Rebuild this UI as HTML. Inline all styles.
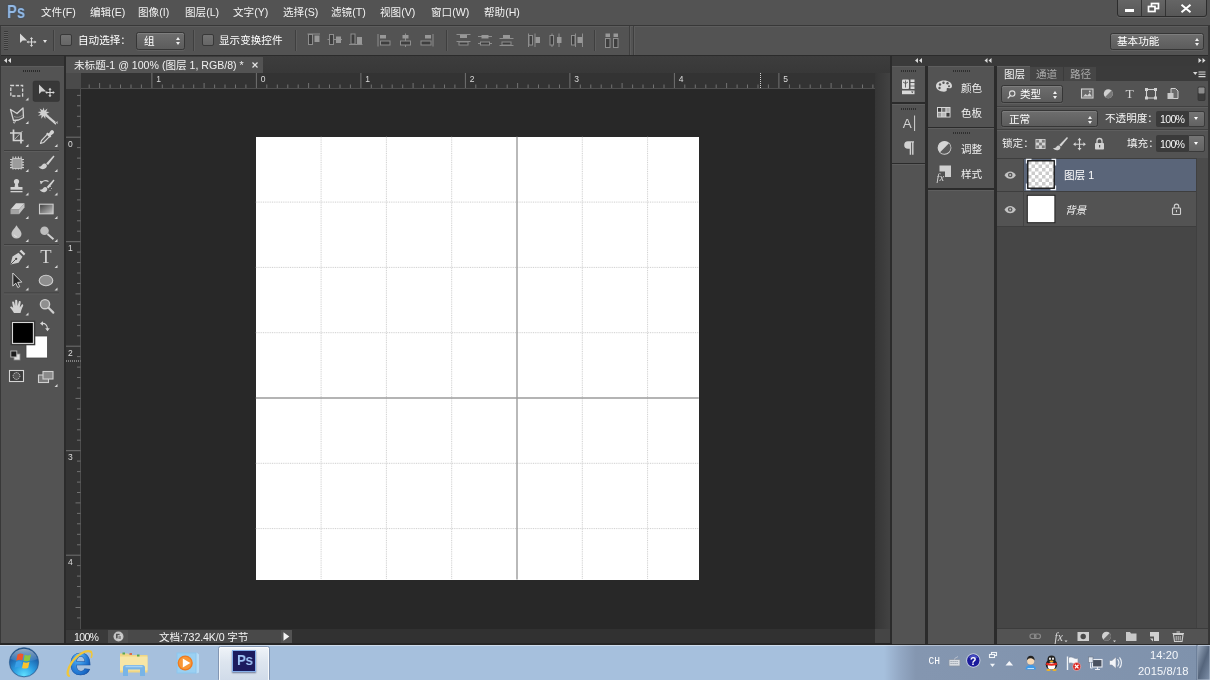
<!DOCTYPE html>
<html lang="zh-CN">
<head>
<meta charset="utf-8">
<title>Photoshop</title>
<style>
*{box-sizing:border-box;margin:0;padding:0}
html,body{width:1210px;height:680px;overflow:hidden;background:#535353}.t,span.a,svg{will-change:transform}
body{position:relative;font-family:"Liberation Sans","Noto Sans CJK SC",sans-serif;font-size:10.6px;color:#ececec;line-height:1}
.a{position:absolute}
.t{position:absolute;white-space:nowrap;line-height:14px;height:14px;font-size:10.6px}
svg{position:absolute;overflow:visible}
/* menubar */
#menubar{left:0;top:0;width:1210px;height:25px;background:#535353}
#menubar .t{top:5px;color:#f2f2f2}
#optbar{left:0;top:24.5px;width:1210px;height:31px;background:#535353;border-top:1.5px solid #383838;border-bottom:1px solid #2e2e2e;box-shadow:inset 0 1px 0 #5d5d5d}
.sep{position:absolute;top:30px;width:2px;height:21px;background:#3f3f3f;border-right:1px solid #5d5d5d}
.cb{position:absolute;width:12px;height:12px;top:33.5px;border:1px solid #383838;border-radius:2px;background:linear-gradient(#727272,#666)}
.dd{position:absolute;border:1px solid #363636;border-radius:2.5px;background:linear-gradient(#6e6e6e,#5c5c5c);box-shadow:inset 0 1px 0 #7e7e7e,0 1px 0 #5f5f5f}
.dd .t{color:#fff}
.ud{position:absolute;width:0;height:0;border-left:2.6px solid transparent;border-right:2.6px solid transparent}
.ud.u{border-bottom:3px solid #f0f0f0}
.ud.d{border-top:3px solid #f0f0f0}
#dark{left:0;top:55px;width:1210px;height:590px;background:#2b2b2b}
/* toolbox */
#tbhead{left:0;top:55.5px;width:63.5px;height:10.5px;background:#3a3a3a}
#tools{left:0;top:66px;width:63.5px;height:579px;background:#535353;border-top:1px solid #5c5c5c}
/* doc */
#tabbar{left:66px;top:56px;width:823.5px;height:17px;background:linear-gradient(#3d3d3d,#383838)}
#tab{left:66px;top:56.5px;width:197px;height:16.5px;background:#535353}
#hruler{left:66px;top:72.5px;width:809.5px;height:16px;background:#333;border-bottom:1px solid #4e4e4e}
#vruler{left:65.5px;top:88.5px;width:15.5px;height:540.5px;background:#333;border-right:1px solid #4e4e4e}
#rcorner{left:65.5px;top:72.5px;width:15.5px;height:16px;background:#4a4a4a}
#canvasarea{left:81px;top:88.5px;width:794px;height:540.5px;background:#282828}
#doc{left:255.8px;top:136.8px;width:443px;height:442.8px;background:#fff}
#vscroll{left:875px;top:72.5px;width:14.5px;height:556.5px;background:linear-gradient(90deg,#363636,#424242)}
#status{left:65.5px;top:629px;width:824px;height:16px;background:#313131}
/* right panels */
.ph{background:#3a3a3a}
.pn{background:#535353;border-top:1px solid #5e5e5e}
#taskbar{left:0;top:645px;width:1210px;height:35px;background:linear-gradient(90deg,#a6c0dd 0,#a6c0dd 884px,#93a8c4 900px,#8496b0 916px,#7f92ac 100%)}
</style>
</head>
<body>
<div id="menubar" class="a">
  <span class="t" style="left:41px">文件(F)</span>
  <span class="t" style="left:89.5px">编辑(E)</span>
  <span class="t" style="left:138px">图像(I)</span>
  <span class="t" style="left:185px">图层(L)</span>
  <span class="t" style="left:233px">文字(Y)</span>
  <span class="t" style="left:282.5px">选择(S)</span>
  <span class="t" style="left:331px">滤镜(T)</span>
  <span class="t" style="left:380px">视图(V)</span>
  <span class="t" style="left:431px">窗口(W)</span>
  <span class="t" style="left:484px">帮助(H)</span>
</div>
<div id="optbar" class="a"></div>
<!-- options bar content -->
<svg style="left:3px;top:30px" width="6" height="21" viewBox="0 0 6 21"><g stroke="#3a3a3a" stroke-width="1"><path d="M1 1.5h4M1 3.5h4M1 5.5h4M1 7.5h4M1 9.5h4M1 11.5h4M1 13.5h4M1 15.5h4M1 17.5h4M1 19.5h4"/></g><g stroke="#626262" stroke-width="1"><path d="M1 2.5h4M1 4.5h4M1 6.5h4M1 8.5h4M1 10.5h4M1 12.5h4M1 14.5h4M1 16.5h4M1 18.5h4"/></g></svg>
<svg style="left:19px;top:33px" width="18" height="15" viewBox="0 0 18 15"><path d="M1 0.5v9.5l2.6-2.4h4.6z" fill="#d8d8d8"/><g stroke="#d8d8d8" stroke-width="1.1" fill="none"><path d="M12.5 5.5v7M9 9h7"/></g><path d="M12.5 4l1.6 2h-3.2zM12.500 14l1.6-2h-3.2zM7.500 9l2-1.600v3.200zM17.500 9l-2-1.600v3.200z" fill="#d8d8d8"/></svg>
<div class="ud d" style="left:43px;top:39.500px;border-top-color:#e4e4e4"></div>
<div class="sep" style="left:53px"></div>
<div class="cb" style="left:60px"></div>
<span class="t" style="left:77.500px;top:32.500px;color:#fff">自动选择：</span>
<div class="dd" style="left:135.500px;top:31.500px;width:49px;height:18px"><span class="t" style="left:7px;top:1px">组</span><div class="ud u" style="left:39.500px;top:4.500px"></div><div class="ud d" style="left:39.500px;top:9.500px"></div></div>
<div class="sep" style="left:193px"></div>
<div class="cb" style="left:202px"></div>
<span class="t" style="left:219px;top:32.500px;color:#fff">显示变换控件</span>
<div class="sep" style="left:294.500px"></div>
<div class="sep" style="left:445.500px"></div>
<div class="sep" style="left:593.500px"></div>
<div class="sep" style="left:629px;top:26px;height:29px"></div>
<div class="sep" style="left:633px;top:26px;height:29px"></div>
<!--ALIGN--><svg style="left:300px;top:28px" width="330" height="26" viewBox="300 28 330 26"><path d="M307.500 34h12.500" stroke="#8e8e8e" stroke-width="1" fill="none"/><rect x="308.5" y="34.5" width="4" height="10" fill="#3e3e3e" stroke="#8e8e8e" stroke-width="1"/><rect x="314.5" y="35.5" width="5" height="6.5" fill="#989898"/><path d="M327.500 39.500h14.500" stroke="#8e8e8e" stroke-width="1" fill="none"/><rect x="329.5" y="34.5" width="4" height="10" fill="#3e3e3e" stroke="#8e8e8e" stroke-width="1"/><rect x="336" y="36.5" width="5" height="6.5" fill="#989898"/><rect x="351" y="34" width="4" height="10" fill="#3e3e3e" stroke="#8e8e8e" stroke-width="1"/><rect x="357" y="37" width="5" height="7" fill="#989898"/><path d="M349 44.500h13.500" stroke="#8e8e8e" stroke-width="1" fill="none"/><path d="M378 34v12.500" stroke="#8e8e8e" stroke-width="1" fill="none"/><rect x="380" y="35" width="6" height="3.5" fill="#989898"/><rect x="380.5" y="41" width="9.5" height="4" fill="#3e3e3e" stroke="#8e8e8e" stroke-width="1"/><path d="M405.500 33.500v13.500" stroke="#8e8e8e" stroke-width="1" fill="none"/><rect x="402.5" y="35" width="6" height="3.5" fill="#989898"/><rect x="400.5" y="41" width="10" height="4" fill="#3e3e3e" stroke="#8e8e8e" stroke-width="1"/><path d="M433 34v12.500" stroke="#8e8e8e" stroke-width="1" fill="none"/><rect x="425" y="35" width="6" height="3.5" fill="#989898"/><rect x="421" y="41" width="10" height="4" fill="#3e3e3e" stroke="#8e8e8e" stroke-width="1"/><path d="M456.5 34.500h14M456.5 41.500h14" stroke="#8e8e8e" stroke-width="1" fill="none"/><rect x="460.0" y="35" width="7" height="3" fill="#989898"/><rect x="459.0" y="42" width="9" height="3" fill="#3e3e3e" stroke="#8e8e8e" stroke-width="1"/><path d="M478 36.500h14M478 43.500h14" stroke="#8e8e8e" stroke-width="1" fill="none"/><rect x="481.5" y="35" width="7" height="3.5" fill="#989898"/><rect x="480.5" y="42" width="9" height="3" fill="#3e3e3e" stroke="#8e8e8e" stroke-width="1"/><path d="M499.5 38.500h14M499.5 45.500h14" stroke="#8e8e8e" stroke-width="1" fill="none"/><rect x="503.0" y="35" width="7" height="3" fill="#989898"/><rect x="502.0" y="42" width="9" height="3" fill="#3e3e3e" stroke="#8e8e8e" stroke-width="1"/><path d="M528.5 33.500v13.500M535.0 33.500v13.500" stroke="#8e8e8e" stroke-width="1" fill="none"/><rect x="529.0" y="35.5" width="3.5" height="9.5" fill="#3e3e3e" stroke="#8e8e8e" stroke-width="1"/><rect x="535.5" y="37" width="4.5" height="6" fill="#989898"/><path d="M552.0 33.500v13.500M559.0 33.500v13.500" stroke="#8e8e8e" stroke-width="1" fill="none"/><rect x="550.0" y="35.5" width="3.5" height="9.5" fill="#3e3e3e" stroke="#8e8e8e" stroke-width="1"/><rect x="557.0" y="37" width="4.5" height="6" fill="#989898"/><path d="M575.5 33.500v13.500M582.5 33.500v13.500" stroke="#8e8e8e" stroke-width="1" fill="none"/><rect x="571.5" y="35.5" width="3.5" height="9.5" fill="#3e3e3e" stroke="#8e8e8e" stroke-width="1"/><rect x="577.5" y="37" width="4.5" height="6" fill="#989898"/><rect x="605.5" y="33.5" width="4.5" height="3.5" fill="#989898"/><rect x="613.5" y="33.5" width="4.5" height="3.5" fill="#989898"/><rect x="605.5" y="38.5" width="4.5" height="9" fill="#3e3e3e" stroke="#8e8e8e" stroke-width="1"/><rect x="613.5" y="38.5" width="4.5" height="9" fill="#3e3e3e" stroke="#8e8e8e" stroke-width="1"/></svg><!--ALIGN-END-->
<div class="dd" style="left:1110px;top:32.500px;width:93.500px;height:17px"><span class="t" style="left:6px;top:0.500px">基本功能</span><div class="ud u" style="left:84px;top:4.500px"></div><div class="ud d" style="left:84px;top:9.500px"></div></div>
<!-- window buttons -->
<div class="a" style="left:1116.500px;top:-2px;width:90.500px;height:18.500px;border:1px solid #2c2c2c;border-radius:0 0 3px 3px;background:linear-gradient(#666,#575757);box-shadow:0 1px 0 #626262"></div>
<div class="a" style="left:1141px;top:0;width:1px;height:16px;background:#333"></div>
<div class="a" style="left:1165px;top:0;width:1px;height:16px;background:#333"></div>
<div class="a" style="left:1125px;top:9px;width:9px;height:2.600px;background:#fff"></div>
<svg style="left:1147px;top:2px" width="13" height="11" viewBox="0 0 13 11"><g fill="none" stroke="#fff" stroke-width="1.700"><rect x="4.500" y="1.500" width="7" height="5"/><rect x="1.500" y="4.500" width="6.500" height="5" fill="#5e5e5e"/></g></svg>
<svg style="left:1180px;top:4px" width="12" height="9" viewBox="0 0 12 9"><path d="M1.500 0.800l9 7.400M10.500 0.800l-9 7.400" stroke="#fff" stroke-width="2" fill="none"/></svg>
<!-- Ps logo -->
<span class="a" style="left:6.500px;top:1.500px;font-size:17.500px;font-weight:bold;color:#93b9e4;line-height:20px;font-family:'Liberation Sans',sans-serif;transform:scaleX(.84);transform-origin:0 0;text-shadow:0 0 1.500px #2d4f7a">Ps</span>
<!--OPT-END-->
<div id="dark" class="a"></div>
<div id="tbhead" class="a"></div>
<div id="tools" class="a"></div>
<!--TOOLS--><svg style="left:0;top:0" width="66" height="400" viewBox="0 0 66 400">
<defs>
<path id="tri" d="M3 0v3h-3z" fill="#d6d6d6"/>
<linearGradient id="gr1" x1="0" y1="0" x2="1" y2="1"><stop offset="0" stop-color="#3a3a3a"/><stop offset="1" stop-color="#c8c8c8"/></linearGradient>
</defs>
<!-- left edge -->
<rect x="0" y="55" width="1" height="590" fill="#383838"/>
<!-- collapse arrows -->
<path d="M7 58v5l-3-2.500zM11 58v5l-3-2.500z" fill="#dcdcdc"/>
<!-- gripper -->
<path d="M23 71h17" stroke="#2a2a2a" stroke-width="2" stroke-dasharray="1 1"/>
<!-- selected tool bg -->
<rect x="33" y="81" width="26.500" height="20.500" rx="2" fill="#383838" stroke="#303030" stroke-width="0.500"/>
<!-- separators -->
<g stroke="#3e3e3e" stroke-width="1"><path d="M4 150.500h55M4 244.500h55M4 293h55"/></g>
<g stroke="#5d5d5d" stroke-width="1"><path d="M4 151.500h55M4 245.500h55M4 294h55"/></g>
<!-- corner triangles -->
<use href="#tri" x="25.500" y="97.500"/>
<use href="#tri" x="25.500" y="121"/><use href="#tri" x="54.500" y="121"/>
<use href="#tri" x="25.500" y="144"/><use href="#tri" x="54.500" y="144"/>
<use href="#tri" x="25.500" y="169"/><use href="#tri" x="54.500" y="169"/>
<use href="#tri" x="25.500" y="192.500"/><use href="#tri" x="54.500" y="192.500"/>
<use href="#tri" x="25.500" y="216"/><use href="#tri" x="54.500" y="216"/>
<use href="#tri" x="25.500" y="239"/><use href="#tri" x="54.500" y="239"/>
<use href="#tri" x="25.500" y="265"/><use href="#tri" x="54.500" y="265"/>
<use href="#tri" x="25.500" y="287.500"/><use href="#tri" x="54.500" y="287.500"/>
<use href="#tri" x="25.500" y="312.500"/>
<use href="#tri" x="54.500" y="384"/>
<!-- row0: marquee, move -->
<rect x="10.800" y="85.500" width="11.800" height="10.500" fill="none" stroke="#d4d4d4" stroke-width="1.300" stroke-dasharray="3.300 1.600"/>
<g transform="translate(38.500,84.500)"><path d="M0.500 0v9.500l2.600-2.400h4.600z" fill="#d0d0d0"/><path d="M11.500 4.500v7M8 8h7" stroke="#d8d8d8" stroke-width="1.100" fill="none"/><path d="M11.500 3.200l1.600 2h-3.200zM11.500 12.800l1.600-2h-3.200zM6.700 8l2-1.600v3.200zM16.300 8l-2-1.600v3.200z" fill="#d8d8d8"/></g>
<!-- row1: lasso, wand -->
<path d="M10.500 109.500l6.500 4 6-5.500 0.500 9.500-5 2.500-5 0.500z" fill="none" stroke="#d2d2d2" stroke-width="1.300" stroke-linejoin="round"/>
<path d="M13.500 120.500c1.500 0 2.500 0.800 1.500 2s-1.800 0.500-1.200-0.800" fill="none" stroke="#d2d2d2" stroke-width="1"/>
<path d="M14 116.500c3 1.500 6 1 9-1.500" fill="none" stroke="#9a9a9a" stroke-width="0.800"/>
<g fill="#d0d0d0"><path d="M43.500 107.500l1 3.200 3-2.200-1.300 3.300 3.300 0.200-3 1.700 2.500 2.500-3.500-0.800-0.200 3.500-1.800-3-2.300 2.800 0.300-3.600-3.500 1 2.600-2.500-3-1.500 3.500-0.500-1.500-3.200 3 1.800z"/><path d="M46.500 114l10.500 9-1.500 1.700-10.500-9z"/></g>
<path d="M55.500 122.500l1.800 1.500" stroke="#555" stroke-width="1"/>
<!-- row2: crop, eyedropper -->
<g fill="none" stroke="#d4d4d4" stroke-width="1.700"><path d="M13.500 129.500v11h10M10 133h11v10.500"/></g>
<path d="M14.500 139.500l8-8.500" stroke="#bdbdbd" stroke-width="0.900"/>
<g><path d="M40.500 143.500l1-3 6.500-6.800 2.200 2.200-6.600 6.600z" fill="none" stroke="#d4d4d4" stroke-width="1.100" stroke-linejoin="round"/><path d="M46.800 133.200l3.800 3.800" stroke="#d4d4d4" stroke-width="2.200"/><path d="M48.500 134l2.200-3.200a1.900 1.900 0 0 1 2.800 2.600l-3 2.400z" fill="#d4d4d4"/></g>
<!-- row3: healing, brush -->
<g stroke="#d2d2d2" stroke-width="1.100"><path d="M13 156.500v13M15.700 156.500v13M18.400 156.500v13M21.100 156.500v13M10 159.500h14M10 162.200h14M10 164.900h14M10 167.600h14"/></g>
<rect x="12" y="158.500" width="10" height="10" rx="1.500" fill="#9c9c9c" stroke="#cfcfcf" stroke-width="0.800"/>
<g><path d="M53.500 155.500l1 1-6.500 8.500-1.800-1.500z" fill="#d4d4d4"/><path d="M38.500 166.500c2 0.500 3-0.500 4-2 1-1.500 3-1.500 4 0 1 1.500 0 3.500-2 4.300-2 0.800-4.500 0.200-6-2.300z" fill="#d0d0d0"/></g>
<!-- row4: stamp, history brush -->
<g fill="#d2d2d2"><circle cx="16.500" cy="181.500" r="2.600"/><path d="M15.200 183h2.600l0.700 4.500h-4z"/><path d="M10.500 187h12v2.700h-12z"/><path d="M10.500 191h12v1.300h-12z"/></g>
<g><path d="M53.500 179.500l1 1-6 8-1.800-1.500z" fill="#d4d4d4"/><path d="M39.500 189.500c2 0.500 3-0.300 3.800-1.500 1-1.400 2.800-1.400 3.700 0 0.900 1.400 0 3.200-1.800 3.900-1.900 0.700-4.200 0.100-5.700-2.400z" fill="#d0d0d0"/><path d="M41 183.500c1.500-3 5-3.500 7.500-2" fill="none" stroke="#cfcfcf" stroke-width="1.100"/><path d="M39.800 180.800l3.300 0.700-2.300 2.700z" fill="#cfcfcf"/><path d="M50.500 186.500v0.100M51.500 188.500v0.100M50 190.500v0.100" stroke="#bbb" stroke-width="1" stroke-linecap="round"/></g>
<!-- row5: eraser, gradient -->
<g><path d="M10.500 209.500l5.500-6.300h8.500l-5.500 6.300z" fill="#d6d6d6"/><path d="M10.500 209.500h8.500v4.700h-8.500z" fill="#a4a4a4"/><path d="M19 209.500l5.500-6.300v4.300l-5.500 6.700z" fill="#c2c2c2"/></g>
<rect x="39.500" y="204.200" width="13.600" height="9.600" fill="url(#gr1)" stroke="#cfcfcf" stroke-width="1.100"/>
<!-- row6: blur, dodge -->
<path d="M16.500 225.200c1.500 3 5 5.500 5 8.800a5 4.600 0 0 1-10 0c0-3.300 3.500-5.800 5-8.800z" fill="#c6c6c6"/>
<path d="M14 234.500a2.600 2.600 0 0 0 2.800 2" fill="none" stroke="#e2e2e2" stroke-width="0.900"/>
<g><circle cx="44.500" cy="230.800" r="4.300" fill="#bdbdbd"/><path d="M47.500 234l6 5.300" stroke="#d2d2d2" stroke-width="1.900"/></g>
<!-- row7: pen, T -->
<g><path d="M10.500 264.500l2-8 6-3.800 4 4-4 6z" fill="#cfcfcf"/><path d="M10.800 264.200l5-5" stroke="#444" stroke-width="0.900"/><circle cx="16.200" cy="258.800" r="1.100" fill="#444"/><path d="M19.500 251.200l1.800-1.400 4 4-1.400 1.800z" fill="#d6d6d6"/></g>
<text x="46" y="263.300" font-family="Liberation Serif,serif" font-size="18.500" fill="#d4d4d4" text-anchor="middle">T</text>
<!-- row8: path select, ellipse -->
<path d="M12.800 273v13l3-2.800 2 4.300 1.900-0.900-2-4.200 4.100-0.300z" fill="#2a2a2a" stroke="#d4d4d4" stroke-width="1"/>
<ellipse cx="46" cy="280.500" rx="6.800" ry="5.200" fill="#8e8e8e" stroke="#d0d0d0" stroke-width="1.100"/>
<!-- row9: hand, zoom -->
<path d="M14 313c-1.200-2.200-2.600-4.200-4-5.800 0.700-1 2-0.700 3.200 0.800l-1.100-6c0.900-0.800 1.900-0.400 2.200 0.700l0.800 3.300 0.100-5.800c0.900-0.800 2-0.500 2.100 0.600l0.300 5.200 1.300-4.700c1-0.500 1.900 0 1.800 1.100l-1 5 2.200-3c1-0.200 1.600 0.500 1.200 1.500-1.300 2.500-2 4.700-2.600 7.100z" fill="#d2d2d2"/>
<g><circle cx="45" cy="304.200" r="4.600" fill="#8f8f8f" stroke="#cdcdcd" stroke-width="1.400"/><path d="M48.500 307.800l4.800 4.800" stroke="#cdcdcd" stroke-width="2.200" stroke-linecap="round"/></g>
<!-- colours -->
<rect x="26" y="336" width="21.500" height="22" fill="#fff" stroke="#444" stroke-width="0.800"/>
<rect x="11.800" y="321.800" width="22.300" height="22.300" fill="#000" stroke="#3a3a3a" stroke-width="2.400"/>
<rect x="12.500" y="322.500" width="20.900" height="20.900" fill="#000" stroke="#d8d8d8" stroke-width="1.100"/>
<g fill="none" stroke="#d6d6d6" stroke-width="1.100"><path d="M42 323.500c3-0.500 5.500 1.500 5.500 5.500"/></g>
<path d="M40 323.500l3-2.300v4.600zM47.500 331.300l-2.300-3h4.600z" fill="#d6d6d6"/>
<rect x="14" y="354" width="6" height="6" fill="#e0e0e0" stroke="#8a8a8a" stroke-width="0.800"/>
<rect x="10.800" y="351" width="6" height="6" fill="#1c1c1c" stroke="#bdbdbd" stroke-width="0.900"/>
<!-- quick mask / screen -->
<rect x="9.500" y="370.500" width="14" height="11" fill="#3a3a3a" stroke="#d4d4d4" stroke-width="1.100"/>
<circle cx="16.500" cy="376" r="3.400" fill="#555" stroke="#d4d4d4" stroke-width="1" stroke-dasharray="1.200 0.900"/>
<rect x="38.500" y="375" width="10" height="7.500" fill="#7a7a7a" stroke="#d0d0d0" stroke-width="1.100"/>
<rect x="43" y="371.500" width="10" height="7.500" fill="#8a8a8a" stroke="#d0d0d0" stroke-width="1.100"/>
</svg>
<!--TOOLS-END-->
<div id="tabbar" class="a"></div>
<div id="tab" class="a"></div>
<div id="hruler" class="a"></div>
<div id="vruler" class="a"></div>
<div id="rcorner" class="a"></div>
<div id="canvasarea" class="a"></div>
<div id="doc" class="a"></div>
<!--DOC--><span class="t" style="left:74px;top:57.5px;color:#f0f0f0;font-size:10.6px">未标题-1 @ 100% (图层 1, RGB/8) *</span>
<svg style="left:251.5px;top:61.5px" width="6" height="6" viewBox="0 0 6 6"><path d="M0.500 0.500l5 5M5.500 0.500l-5 5" stroke="#e4e4e4" stroke-width="1.200"/></svg>
<svg style="left:0;top:0" width="890" height="640" viewBox="0 0 890 640"><path d="M89.2 84.5v3.5M99.6 83v5M110.1 84.5v3.5M120.5 84.5v3.5M131.0 84.5v3.5M141.4 84.5v3.5M151.9 73v15M162.3 84.5v3.5M172.8 84.5v3.5M183.2 84.5v3.5M193.7 84.5v3.5M204.1 83v5M214.6 84.5v3.5M225.0 84.5v3.5M235.5 84.5v3.5M245.9 84.5v3.5M256.4 73v15M266.8 84.5v3.5M277.3 84.5v3.5M287.8 84.5v3.5M298.2 84.5v3.5M308.6 83v5M319.1 84.5v3.5M329.5 84.5v3.5M340.0 84.5v3.5M350.4 84.5v3.5M360.9 73v15M371.3 84.5v3.5M381.8 84.5v3.5M392.2 84.5v3.5M402.7 84.5v3.5M413.1 83v5M423.6 84.5v3.5M434.0 84.5v3.5M444.5 84.5v3.5M454.9 84.5v3.5M465.4 73v15M475.8 84.5v3.5M486.3 84.5v3.5M496.8 84.5v3.5M507.2 84.5v3.5M517.6 83v5M528.1 84.5v3.5M538.5 84.5v3.5M549.0 84.5v3.5M559.5 84.5v3.5M569.9 73v15M580.3 84.5v3.5M590.8 84.5v3.5M601.2 84.5v3.5M611.7 84.5v3.5M622.1 83v5M632.6 84.5v3.5M643.0 84.5v3.5M653.5 84.5v3.5M664.0 84.5v3.5M674.4 73v15M684.8 84.5v3.5M695.3 84.5v3.5M705.8 84.5v3.5M716.2 84.5v3.5M726.6 83v5M737.1 84.5v3.5M747.5 84.5v3.5M758.0 84.5v3.5M768.4 84.5v3.5M778.9 73v15M789.4 84.5v3.5M799.8 84.5v3.5M810.2 84.5v3.5M820.7 84.5v3.5M831.1 83v5M841.6 84.5v3.5M852.0 84.5v3.5M862.5 84.5v3.5M872.9 84.5v3.5" stroke="#727272" stroke-width="1" fill="none"/><path d="M77 95.4h3.500M77 105.8h3.500M77 116.3h3.500M77 126.7h3.500M66 137.2h14.500M77 147.6h3.500M77 158.1h3.500M77 168.5h3.500M77 179.0h3.500M75.500 189.4h5M77 199.9h3.500M77 210.3h3.500M77 220.8h3.500M77 231.2h3.500M66 241.7h14.500M77 252.1h3.500M77 262.6h3.500M77 273.0h3.500M77 283.5h3.500M75.500 293.9h5M77 304.4h3.500M77 314.9h3.500M77 325.3h3.500M77 335.8h3.500M66 346.2h14.500M77 356.6h3.500M77 367.1h3.500M77 377.5h3.500M77 388.0h3.500M75.500 398.4h5M77 408.9h3.500M77 419.3h3.500M77 429.8h3.500M77 440.2h3.500M66 450.7h14.500M77 461.1h3.500M77 471.6h3.500M77 482.1h3.500M77 492.5h3.500M75.500 502.9h5M77 513.4h3.500M77 523.8h3.500M77 534.3h3.500M77 544.8h3.500M66 555.2h14.500M77 565.6h3.500M77 576.1h3.500M77 586.5h3.500M77 597.0h3.500M75.500 607.5h5M77 617.9h3.500" stroke="#727272" stroke-width="1" fill="none"/><text x="156.2" y="82.300" font-size="8.500" fill="#dcdcdc" font-family="Liberation Sans,sans-serif">1</text><text x="260.7" y="82.300" font-size="8.500" fill="#dcdcdc" font-family="Liberation Sans,sans-serif">0</text><text x="365.2" y="82.300" font-size="8.500" fill="#dcdcdc" font-family="Liberation Sans,sans-serif">1</text><text x="469.7" y="82.300" font-size="8.500" fill="#dcdcdc" font-family="Liberation Sans,sans-serif">2</text><text x="574.2" y="82.300" font-size="8.500" fill="#dcdcdc" font-family="Liberation Sans,sans-serif">3</text><text x="678.7" y="82.300" font-size="8.500" fill="#dcdcdc" font-family="Liberation Sans,sans-serif">4</text><text x="783.2" y="82.300" font-size="8.500" fill="#dcdcdc" font-family="Liberation Sans,sans-serif">5</text><text x="68" y="146.7" font-size="8.500" fill="#dcdcdc" font-family="Liberation Sans,sans-serif">0</text><text x="68" y="251.2" font-size="8.500" fill="#dcdcdc" font-family="Liberation Sans,sans-serif">1</text><text x="68" y="355.7" font-size="8.500" fill="#dcdcdc" font-family="Liberation Sans,sans-serif">2</text><text x="68" y="460.2" font-size="8.500" fill="#dcdcdc" font-family="Liberation Sans,sans-serif">3</text><text x="68" y="564.7" font-size="8.500" fill="#dcdcdc" font-family="Liberation Sans,sans-serif">4</text><path d="M760.500 73v15" stroke="#d0d0d0" stroke-width="1" stroke-dasharray="1 1"/><path d="M66 361h14.500" stroke="#d0d0d0" stroke-width="1" stroke-dasharray="1 1"/><path d="M321.1 136.8v442.8M255.8 202.1h443M386.4 136.8v442.8M255.8 267.4h443M451.7 136.8v442.8M255.8 332.7h443M582.3 136.8v442.8M255.8 463.3h443M647.6 136.8v442.8M255.8 528.6h443" stroke="#cfcfcf" stroke-width="1" stroke-dasharray="1 0.800" fill="none"/><path d="M517.0 136.8v442.8M255.8 398.0h443" stroke="#9c9c9c" stroke-width="1.400" fill="none"/></svg><!--DOC-END-->
<div id="vscroll" class="a"></div>
<div id="status" class="a"></div>
<!--STATUS--><div class="a" style="left:65.500px;top:629.500px;width:43px;height:13.300px;background:#3a3a3a"></div>
<span class="t" style="left:74px;top:629.500px;color:#f0f0f0;letter-spacing:-0.700px">100%</span>
<div class="a" style="left:108px;top:629.500px;width:20px;height:13.300px;background:#505050"></div>
<svg style="left:113px;top:631px" width="11" height="11" viewBox="0 0 11 11"><circle cx="5.500" cy="5.500" r="5" fill="#c4c4c4"/><rect x="3" y="2.800" width="3.600" height="4.600" fill="#555"/><rect x="5" y="4.500" width="3.200" height="3.800" fill="#888" stroke="#eee" stroke-width="0.500"/></svg>
<div class="a" style="left:128px;top:629.500px;width:152.500px;height:13.300px;background:#494949"></div>
<span class="t" style="left:158.500px;top:629.500px;color:#f4f4f4;letter-spacing:-0.100px">文档:732.4K/0 字节</span>
<div class="a" style="left:280.500px;top:629.500px;width:11px;height:13.300px;background:#535353"></div>
<svg style="left:283px;top:632px" width="7" height="9" viewBox="0 0 7 9"><path d="M0.500 0.300v8.400l5.800-4.200z" fill="#f4f4f4"/></svg>
<div class="a" style="left:875px;top:629px;width:14.500px;height:14px;background:#454545"></div>
<!--STATUS-END-->
<!--RIGHT--><!-- header strip -->
<div class="a ph" style="left:892px;top:55.500px;width:318px;height:10.500px"></div>
<svg style="left:0;top:0" width="1210" height="70" viewBox="0 0 1210 70"><g fill="#dcdcdc"><path d="M918 58v5l-3-2.500zM922 58v5l-3-2.500z"/><path d="M987.500 58v5l-3-2.500zM991.500 58v5l-3-2.500z"/><path d="M1198.500 58v5l3-2.500zM1202.500 58v5l3-2.500z"/></g></svg>
<!-- column 1 -->
<div class="a pn" style="left:892px;top:66px;width:33px;height:36px"></div>
<div class="a pn" style="left:892px;top:103.500px;width:33px;height:59px"></div>
<div class="a pn" style="left:892px;top:164px;width:33px;height:481px"></div>
<!-- column 2 -->
<div class="a pn" style="left:927.500px;top:66px;width:66.500px;height:60.500px"></div>
<div class="a pn" style="left:927.500px;top:128px;width:66.500px;height:60px"></div>
<div class="a pn" style="left:927.500px;top:189.500px;width:66.500px;height:455.500px"></div>
<!-- grippers + icons -->
<svg style="left:0;top:0" width="1000" height="200" viewBox="0 0 1000 200">
<g stroke="#2e2e2e" stroke-width="2" stroke-dasharray="1 1"><path d="M901 71h15M953 71h17M901 109h15M953 133h17"/></g>
<!-- 3D / properties icon -->
<g fill="#dadada"><rect x="902" y="79.500" width="7" height="9.500" rx="1"/><rect x="910.500" y="79.500" width="4" height="2.600"/><rect x="910.500" y="83" width="4" height="2.600"/><rect x="910.500" y="86.400" width="4" height="2.600"/><rect x="902" y="90.500" width="12.500" height="3.700"/></g>
<path d="M905.500 80.500v7M903 82l2.500 1.500 2.500-1.500" stroke="#555" stroke-width="0.900" fill="none"/>
<path d="M911 91.500h2.500l-1.250 1.800z" fill="#444"/>
<!-- A| -->
<text x="902.800" y="127.800" font-size="13.400" fill="#d2d2d2" font-family="Liberation Sans,sans-serif">A</text>
<path d="M914.600 115.500v15.500" stroke="#d2d2d2" stroke-width="1"/>
<!-- pilcrow -->
<path d="M908 141.200h6v1.300h-0.500v12.300h-1.400v-12.300h-1v12.300h-1.400v-6h-1.700a3.800 3.800 0 0 1 0-7.600z" fill="#d2d2d2"/>
<!-- palette -->
<path d="M944 80.500c4.500 0 8 2.300 8 5.400 0 2.200-1.800 2.600-3.300 2.300-1.500-0.300-2.400 0.300-2 1.300 0.500 1.400-0.800 2.200-2.700 2.200-4.500 0-8-2.500-8-5.700s3.500-5.500 8-5.500z" fill="#d6d6d6"/>
<g fill="#555"><circle cx="940" cy="84.500" r="1.200"/><circle cx="943.500" cy="82.700" r="1.200"/><circle cx="947.500" cy="83.200" r="1.200"/><circle cx="939.500" cy="88" r="1.200"/><circle cx="949" cy="86.300" r="1"/></g>
<!-- swatches -->
<rect x="937" y="107" width="13.500" height="10.500" fill="#d8d8d8"/>
<g fill="#3c3c3c"><rect x="938" y="108" width="3.200" height="3.800"/><rect x="942.200" y="108" width="3.200" height="3.800" fill="#6a6a6a"/><rect x="946.400" y="108" width="3.200" height="3.800" fill="#aaa"/><rect x="938" y="112.800" width="3.200" height="3.800" fill="#999"/><rect x="942.200" y="112.800" width="3.200" height="3.800" fill="#bbb"/><rect x="946.400" y="112.800" width="3.200" height="3.800"/></g>
<!-- adjustments -->
<circle cx="944.500" cy="147.800" r="6.300" fill="#d4d4d4" stroke="#d4d4d4" stroke-width="1.200"/>
<path d="M949 143.300a6.300 6.300 0 0 1-8.900 8.900z" fill="#5a5a5a"/>
<!-- styles -->
<rect x="939.500" y="165.500" width="11.500" height="11.500" fill="#cfcfcf"/>
<rect x="936.500" y="171.500" width="8.500" height="10" fill="#535353"/>
<text x="936.500" y="181" font-size="10.500" font-style="italic" fill="#d8d8d8" font-family="Liberation Serif,serif">fx</text>
</svg>
<span class="t" style="left:961px;top:81px;color:#f0f0f0">颜色</span>
<span class="t" style="left:961px;top:105.500px;color:#f0f0f0">色板</span>
<span class="t" style="left:961px;top:141.500px;color:#f0f0f0">调整</span>
<span class="t" style="left:961px;top:166.500px;color:#f0f0f0">样式</span>
<!--LAYERS--><!-- layers panel -->
<div class="a" style="left:996.500px;top:66px;width:213.500px;height:15px;background:#3b3b3b"></div>
<div class="a" style="left:996.500px;top:80.500px;width:213.500px;height:77.500px;background:#535353"></div>
<div class="a" style="left:996.500px;top:66px;width:33px;height:15px;background:#535353;border-top:1px solid #616161"></div>
<div class="a" style="left:1030px;top:66.500px;width:32.500px;height:14px;background:#464646"></div>
<div class="a" style="left:1063.500px;top:66.500px;width:32.500px;height:14px;background:#464646"></div>
<span class="t" style="left:1003.500px;top:66.500px;color:#f2f2f2">图层</span>
<span class="t" style="left:1036px;top:66.500px;color:#aaa">通道</span>
<span class="t" style="left:1069.500px;top:66.500px;color:#aaa">路径</span>
<svg style="left:1193px;top:71px" width="13" height="7" viewBox="0 0 13 7"><path d="M0 1h4.500l-2.250 3z" fill="#d8d8d8"/><path d="M5.500 1h7M5.500 3.300h7M5.500 5.600h7" stroke="#d8d8d8" stroke-width="1.100"/></svg>
<!-- filter row -->
<div class="dd" style="left:1000.500px;top:85px;width:62px;height:17.500px"><span class="t" style="left:18px;top:1px">类型</span><div class="ud u" style="left:51.500px;top:4.500px"></div><div class="ud d" style="left:51.500px;top:9.500px"></div>
<svg style="left:5px;top:4px" width="9" height="9" viewBox="0 0 9 9"><circle cx="5.200" cy="3.600" r="2.700" fill="none" stroke="#e0e0e0" stroke-width="1.100"/><path d="M3.300 5.600l-2.600 2.800" stroke="#e0e0e0" stroke-width="1.300"/></svg></div>
<svg style="left:1075px;top:84px" width="135" height="20" viewBox="1075 84 135 20">
<rect x="1081.500" y="89" width="11.500" height="9" fill="#6a6a6a" stroke="#d2d2d2" stroke-width="1.100"/><path d="M1083 96.500l2.500-2.500 2 1.500 2-2.500 2.500 3.500z" fill="#d2d2d2"/><circle cx="1089.800" cy="91.500" r="0.900" fill="#d2d2d2"/>
<circle cx="1108.300" cy="93.700" r="4.500" fill="#d0d0d0"/><path d="M1111.500 90.500a4.500 4.500 0 0 1-6.400 6.400z" fill="#777"/>
<text x="1129.700" y="98.400" font-size="13.500" text-anchor="middle" font-family="Liberation Serif,serif" fill="#d6d6d6">T</text>
<rect x="1146.500" y="89.500" width="9" height="8.500" fill="none" stroke="#d2d2d2" stroke-width="1.100"/><g fill="#d2d2d2"><rect x="1145" y="88" width="3" height="3"/><rect x="1154" y="88" width="3" height="3"/><rect x="1145" y="96.500" width="3" height="3"/><rect x="1154" y="96.500" width="3" height="3"/></g>
<path d="M1171 88.500h4.500l2.500 2.500v7.500h-7z" fill="#6c6c6c" stroke="#d2d2d2" stroke-width="1"/><rect x="1167.500" y="93" width="6" height="6" fill="#c8c8c8"/>
<rect x="1198" y="87" width="7" height="13.500" rx="1" fill="#3c3c3c" stroke="#333" stroke-width="0.800"/><rect x="1198.500" y="87.500" width="6" height="6" rx="0.800" fill="#8c8c8c"/>
</svg>
<div class="a" style="left:996.500px;top:105.500px;width:213.500px;height:1px;background:#404040"></div>
<div class="a" style="left:996.500px;top:106.500px;width:213.500px;height:1px;background:#5e5e5e"></div>
<!-- blend row -->
<div class="dd" style="left:1000.500px;top:110px;width:97px;height:17px"><span class="t" style="left:7px;top:0.500px">正常</span><div class="ud u" style="left:86.500px;top:4.500px"></div><div class="ud d" style="left:86.500px;top:9.500px"></div></div>
<span class="t" style="left:1104.500px;top:111px;color:#f4f4f4">不透明度：</span>
<div class="a" style="left:1156px;top:110.500px;width:32px;height:16px;background:#3a3a3a;border-radius:2px 0 0 2px"></div>
<span class="t" style="left:1159.500px;top:111.500px;color:#f4f4f4;letter-spacing:-0.700px">100%</span>
<div class="a" style="left:1188px;top:110.500px;width:16.500px;height:16px;background:linear-gradient(#757575,#626262);border:1px solid #3a3a3a;border-radius:0 2px 2px 0"></div>
<div class="ud d" style="left:1193.500px;top:117px;border-top-color:#fff"></div>
<div class="a" style="left:996.500px;top:128.500px;width:213.500px;height:1px;background:#404040"></div>
<div class="a" style="left:996.500px;top:129.500px;width:213.500px;height:1px;background:#5e5e5e"></div>
<!-- lock row -->
<span class="t" style="left:1002px;top:136px;color:#f4f4f4">锁定：</span>
<svg style="left:1030px;top:134px" width="80" height="18" viewBox="1030 134 80 18">
<rect x="1035.500" y="139" width="10" height="10" fill="#d4d4d4"/><g fill="#7c7c7c"><rect x="1036.300" y="139.800" width="2.800" height="2.800"/><rect x="1041.900" y="139.800" width="2.800" height="2.800"/><rect x="1039.100" y="142.600" width="2.800" height="2.800"/><rect x="1036.300" y="145.400" width="2.800" height="2.800"/><rect x="1041.900" y="145.400" width="2.800" height="2.800"/></g>
<path d="M1067 137l1 1-7 8.500-1.800-1.500z" fill="#d4d4d4"/><path d="M1053 148c1.800 0.300 2.800-0.500 3.600-1.600 0.900-1.300 2.600-1.300 3.500 0 0.800 1.300 0 3-1.700 3.600-1.800 0.600-4 0.100-5.400-2z" fill="#d0d0d0"/>
<g stroke="#d4d4d4" stroke-width="1.100" fill="none"><path d="M1079.500 139.500v9.500M1074.800 144.200h9.500"/></g><path d="M1079.500 137.800l2 2.500h-4zM1079.500 150.600l2-2.500h-4zM1073.100 144.200l2.500-2v4zM1085.900 144.200l-2.500-2v4z" fill="#d4d4d4"/>
<rect x="1095" y="143" width="9" height="6.500" rx="0.800" fill="#d2d2d2"/><path d="M1097 143v-2a2.500 2.500 0 0 1 5 0v2" fill="none" stroke="#d2d2d2" stroke-width="1.300"/><rect x="1099" y="145" width="1.200" height="2.500" fill="#555"/>
</svg>
<span class="t" style="left:1126.500px;top:136px;color:#f4f4f4">填充：</span>
<div class="a" style="left:1156px;top:135px;width:32px;height:16.500px;background:#3a3a3a;border-radius:2px 0 0 2px"></div>
<span class="t" style="left:1159.500px;top:136.500px;color:#f4f4f4;letter-spacing:-0.700px">100%</span>
<div class="a" style="left:1188px;top:135px;width:16.500px;height:16.500px;background:linear-gradient(#757575,#626262);border:1px solid #3a3a3a;border-radius:0 2px 2px 0"></div>
<div class="ud d" style="left:1193.500px;top:142px;border-top-color:#fff"></div>
<!-- list -->
<div class="a" style="left:996.500px;top:157.500px;width:213.500px;height:471px;background:#464646"></div>
<div class="a" style="left:1196px;top:157.500px;width:14px;height:471px;background:#4b4b4b;border-left:1px solid #404040"></div>
<div class="a" style="left:996.500px;top:157.500px;width:199.500px;height:34px;background:#535353;border-top:1px solid #3e3e3e;border-bottom:1px solid #3e3e3e"></div>
<div class="a" style="left:1023.500px;top:158.500px;width:172.500px;height:32.500px;background:#5a6579"></div>
<div class="a" style="left:996.500px;top:191.500px;width:199.500px;height:35px;background:#535353;border-bottom:1px solid #3e3e3e"></div>
<div class="a" style="left:1023px;top:158px;width:1px;height:68px;background:#444"></div>
<svg style="left:1000px;top:158px" width="200" height="70" viewBox="1000 158 200 70">
<defs><pattern id="chk" x="1028" y="161" width="7" height="7" patternUnits="userSpaceOnUse"><rect width="7" height="7" fill="#fff"/><rect width="3.500" height="3.500" fill="#ccc"/><rect x="3.500" y="3.500" width="3.500" height="3.500" fill="#ccc"/></pattern></defs>
<g id="eye1"><path d="M1004.500 175.300c1.500-2.600 3.500-3.800 5.700-3.800s4.200 1.200 5.700 3.800c-1.500 2.400-3.500 3.500-5.700 3.500s-4.200-1.100-5.700-3.500z" fill="#c4c4c4"/><circle cx="1010.200" cy="175" r="2.300" fill="#555"/><circle cx="1010.200" cy="175" r="1" fill="#bbb"/></g>
<use href="#eye1" y="34.500"/>
<rect x="1026.500" y="159.500" width="29" height="30" fill="none" stroke="#eef2f8" stroke-width="1.300" stroke-dasharray="5 20 10 20 9 20 10 20 5 0"/>
<rect x="1027.800" y="160.800" width="26.400" height="27.400" fill="url(#chk)" stroke="#111" stroke-width="1.300"/>
<rect x="1027.300" y="195.300" width="27.600" height="27.400" fill="#fff" stroke="#222" stroke-width="1"/>
<rect x="1172.500" y="208" width="8" height="6.500" rx="0.800" fill="none" stroke="#cfcfcf" stroke-width="1.100"/><path d="M1174.300 208v-1.700a2.200 2.200 0 0 1 4.400 0v1.700" fill="none" stroke="#cfcfcf" stroke-width="1.100"/><rect x="1176" y="210" width="1" height="2.300" fill="#cfcfcf"/>
</svg>
<span class="t" style="left:1063.500px;top:168px;color:#fff">图层 1</span>
<span class="t" style="left:1065px;top:203px;color:#f0f0f0;font-style:italic">背景</span>
<!-- bottom bar -->
<div class="a" style="left:996.500px;top:628px;width:213.500px;height:17px;background:#535353;border-top:1px solid #3c3c3c"></div>
<svg style="left:1025px;top:629px" width="165" height="15" viewBox="1025 629 165 15">
<g fill="none" stroke="#8a8a8a" stroke-width="1.200"><rect x="1030" y="634" width="6" height="4.500" rx="2.200"/><rect x="1034.500" y="634" width="6" height="4.500" rx="2.200"/></g>
<text x="1054.500" y="640.500" font-size="11.500" font-style="italic" font-family="Liberation Serif,serif" fill="#d8d8d8">fx</text><path d="M1064.500 640.500h3l-1.500 1.700z" fill="#d8d8d8"/>
<rect x="1077.500" y="632" width="11.500" height="9" fill="#cfcfcf"/><circle cx="1083.200" cy="636.500" r="2.700" fill="#4a4a4a"/>
<circle cx="1106.500" cy="636.300" r="4.500" fill="#d0d0d0"/><path d="M1109.700 633.100a4.500 4.500 0 0 1-6.400 6.400z" fill="#666"/><path d="M1113 640.500h3l-1.500 1.700z" fill="#d8d8d8"/>
<path d="M1126 632h4l1 1.500h5.500v7.500h-10.500z" fill="#c8c8c8"/>
<path d="M1150 632h9v9h-5v-4.500h-4z" fill="#d0d0d0"/><path d="M1150 638.500h3v3z" fill="#d0d0d0"/>
<path d="M1173.500 634.500h9.500l-1 7h-7.500z" fill="none" stroke="#cfcfcf" stroke-width="1.100"/><path d="M1172.500 633.500h11.500M1176.500 632h3.500" stroke="#cfcfcf" stroke-width="1.200"/><path d="M1176.200 636v4.500M1178.200 636v4.500M1180.200 636v4.500" stroke="#cfcfcf" stroke-width="0.900"/>
</svg>
<!--LAYERS-END-->
<!--RIGHT-END-->
<div id="taskbar" class="a"></div>
<!--WB--><div class="a" style="left:0;top:25.500px;width:1px;height:30px;background:#3c3c3c"></div>
<div class="a" style="left:1208px;top:25.500px;width:2px;height:619px;background:#363636"></div>
<div class="a" style="left:0;top:642.800px;width:892px;height:2.200px;background:#262626"></div>
<div class="a" style="left:892px;top:644px;width:318px;height:1px;background:#2a2a2a"></div>
<!--TASK--><div class="a" style="left:0;top:645px;width:1210px;height:1px;background:linear-gradient(90deg,#cfdcec 0,#cfdcec 884px,#b4c0d2 916px)"></div>
<!-- PS button -->
<div class="a" style="left:217.500px;top:645.500px;width:52px;height:36px;border:1px solid #8296b3;border-radius:2.500px;background:linear-gradient(#f0f4f9,#dde5ef 45%,#d0dbe9);box-shadow:inset 0 0 0 1px #f8fafc"></div>
<div class="a" style="left:231.500px;top:649.500px;width:24px;height:22px;background:#1c1b5e;border:1px solid #86b0ea;box-shadow:0 1px 1.500px rgba(40,50,90,.6)"></div>
<span class="a" style="left:236.500px;top:652px;font:bold 14.500px/16px 'Liberation Sans',sans-serif;color:#9fc4f6;letter-spacing:-0.300px;transform:scaleX(.92);transform-origin:0 0">Ps</span>
<svg style="left:0;top:645px" width="1210" height="35" viewBox="0 645 1210 35">
<defs>
<radialGradient id="orb" cx="0.500" cy="0.950" r="0.950"><stop offset="0" stop-color="#5fe0ff"/><stop offset="0.400" stop-color="#2a9be0"/><stop offset="0.750" stop-color="#1b5fa8"/><stop offset="1" stop-color="#14406f"/></radialGradient>
<linearGradient id="orbhl" x1="0" y1="0" x2="0" y2="1"><stop offset="0" stop-color="#fff" stop-opacity=".55"/><stop offset="1" stop-color="#fff" stop-opacity=".05"/></linearGradient>
<radialGradient id="ieb" cx="0.400" cy="0.350" r="0.750"><stop offset="0" stop-color="#5fc0ff"/><stop offset="0.600" stop-color="#1f74d0"/><stop offset="1" stop-color="#0d3f94"/></radialGradient>
<linearGradient id="sd" x1="0" y1="0" x2="1" y2="1"><stop offset="0" stop-color="#9aaabf"/><stop offset="0.500" stop-color="#55657c"/><stop offset="1" stop-color="#8092ab"/></linearGradient>
</defs>
<!-- start orb -->
<circle cx="24" cy="662.300" r="15.200" fill="#8fa9c8"/>
<circle cx="24" cy="662.300" r="14.500" fill="url(#orb)" stroke="#2c5f95" stroke-width="0.800"/>
<path d="M10.500 659a14 14 0 0 1 27 0c-8 3.500-19 3.500-27 0z" fill="url(#orbhl)"/>
<path d="M17.500 654.500c2-1.200 4-1.200 6-0.200l-1.200 6c-2-0.900-4-0.800-6 0.300z" fill="#f0562a"/>
<path d="M24.800 654.800c2 0.900 4 0.900 6.200-0.300l-1.300 6c-2.100 1.100-4.100 1.100-6.100 0.300z" fill="#8cc63e"/>
<path d="M16 661.800c2-1.100 4-1.200 6-0.300l-1.300 6c-2-0.900-4-0.800-6 0.300z" fill="#3aa0e8"/>
<path d="M23.300 662c2 0.900 4 0.900 6.200-0.300l-1.300 6c-2.200 1.100-4.200 1.100-6.200 0.300z" fill="#fbc42c"/>
<!-- IE -->
<text x="80.300" y="674.800" font-size="40" font-weight="bold" font-family="Liberation Sans,sans-serif" fill="url(#ieb)" text-anchor="middle" stroke="#1a4f9c" stroke-width="0.500">e</text>
<path d="M91 651.800c-4.500-2.500-14 2.500-19.500 11-4.300 6.800-4.800 11.800-2.500 13" fill="none" stroke="#f0c63a" stroke-width="2.300" stroke-linecap="round"/>
<path d="M91 651.800c1.200 1.200 1.200 3.200 0.300 5.500" fill="none" stroke="#f0c63a" stroke-width="1.500" stroke-linecap="round"/>
<!-- explorer -->
<path d="M120 653.500h8l1.500 1.500h18v17.500h-27.500z" fill="#f0d684"/>
<path d="M120 656.500h27.500v14h-27.500z" fill="#f7e6a6"/>
<rect x="122.500" y="652.500" width="2.500" height="2" fill="#5aa850"/><rect x="129.500" y="653" width="2.500" height="2" fill="#d86a4a"/><rect x="137" y="654.500" width="2.500" height="2" fill="#5aa850"/>
<path d="M123 676v-8.500c0-1.500 1-2.500 2.500-2.500h17c1.500 0 2.500 1 2.500 2.500v8.500h-5v-6.500h-12v6.500z" fill="#78b4e6"/>
<path d="M125.500 666.500h17" stroke="#a8d4f4" stroke-width="1.500"/>
<!-- WMP -->
<path d="M176.500 652.500h20l2.500 2v18l-2.500 1h-20z" fill="#8cc6ee"/>
<path d="M196.500 652.500l2.500 2v18l-2.500 1z" fill="#b8dcf6"/>
<rect x="177.500" y="653.500" width="18" height="19" fill="#9ad0f2"/>
<circle cx="185.200" cy="663" r="7.600" fill="#f07a1e"/>
<circle cx="185.200" cy="663" r="6.200" fill="#f89838"/>
<path d="M182.800 658.500v9l7.500-4.500z" fill="#fff"/>
<!-- tray -->
<text x="928.500" y="664" font-family="Liberation Mono,monospace" font-size="10.500" fill="#fff" textLength="11.500" lengthAdjust="spacingAndGlyphs">CH</text>
<g><path d="M949 659.500h11v6.500h-11z" fill="#d8dce2" stroke="#8c95a3" stroke-width="0.800"/><path d="M950.500 661.500h8M950.500 663.500h8" stroke="#8c95a3" stroke-width="0.900" stroke-dasharray="1.200 0.800"/><path d="M954.500 659.500c0-2 2-1.500 3.500-3" fill="none" stroke="#c8ccd4" stroke-width="0.800"/></g>
<circle cx="973.300" cy="660.500" r="7.200" fill="#c4cede"/>
<circle cx="973.300" cy="660.500" r="6.200" fill="#1a1a9c"/>
<path d="M968.500 657.500a5.500 5.500 0 0 1 9.600 0c-3 1.500-6.600 1.500-9.600 0z" fill="#5a62d0" opacity=".7"/>
<text x="973.300" y="664.500" font-family="Liberation Sans,sans-serif" font-weight="bold" font-size="10.500" fill="#fff" text-anchor="middle">?</text>
<g fill="none" stroke="#f0f4f8" stroke-width="1.100"><rect x="991.500" y="652.500" width="5" height="3"/><rect x="989.500" y="654.500" width="5" height="3" fill="#8093ad"/></g>
<path d="M990 663.800h5l-2.500 3.200z" fill="#f0f4f8"/>
<path d="M1005.500 665.500h7.600l-3.800-4.500z" fill="#f4f6fa"/>
<!-- user -->
<g><path d="M1025.500 669.500c0-3 2.200-4.500 5.200-4.500s5.300 1.500 5.300 4.500z" fill="#3f9ae8"/><circle cx="1030.700" cy="661" r="3.600" fill="#f6d8b4"/><path d="M1026.800 660.500c0-3 1.600-4.700 3.900-4.700s4 1.700 4 4.700c-1.500-1.800-3-2.300-4.500-2.300-1.400 0-2.400 0.800-3.400 2.300z" fill="#222"/><path d="M1027.500 668.500h6.500" stroke="#bfe0fa" stroke-width="1"/></g>
<!-- QQ -->
<g><ellipse cx="1051.500" cy="664.500" rx="5.800" ry="5.300" fill="#222"/><ellipse cx="1051.500" cy="659.500" rx="4" ry="4" fill="#222"/><ellipse cx="1051.500" cy="666" rx="3.800" ry="3.600" fill="#fff"/><path d="M1046.500 662.500c3 1.500 7 1.500 10 0l0.500 2.200c-3.500 1.500-7.500 1.500-11 0z" fill="#e8281e"/><ellipse cx="1050" cy="658.800" rx="0.900" ry="1.300" fill="#fff"/><ellipse cx="1053" cy="658.800" rx="0.900" ry="1.300" fill="#fff"/><ellipse cx="1051.500" cy="661.300" rx="2" ry="0.900" fill="#f5b21e"/><ellipse cx="1048.500" cy="670" rx="2.200" ry="1" fill="#f5b21e"/><ellipse cx="1054.500" cy="670" rx="2.200" ry="1" fill="#f5b21e"/></g>
<!-- flag -->
<g><path d="M1067.500 656.500v13.500" stroke="#eef2f6" stroke-width="1.400"/><path d="M1068.500 657.500c2-1 3.500-0.500 5 0.300s3 1 4.500 0.200v6c-1.500 0.800-3 0.600-4.500-0.200s-3-1.300-5-0.300z" fill="#f4f6fa" stroke="#7a8698" stroke-width="0.600"/><circle cx="1076.700" cy="666.600" r="4" fill="#d8201c" stroke="#f6dcdc" stroke-width="0.500"/><path d="M1074.900 664.800l3.600 3.600M1078.500 664.800l-3.600 3.600" stroke="#fff" stroke-width="1.300"/></g>
<!-- network -->
<g><rect x="1092.500" y="659.500" width="9.500" height="7.500" fill="#4a5260" stroke="#e8ecf2" stroke-width="1.100"/><path d="M1095 669.500h5M1097.500 667v2.500" stroke="#e8ecf2" stroke-width="1.200"/><rect x="1088.500" y="657" width="4.500" height="5.500" fill="#dfe5ee" stroke="#6a7484" stroke-width="0.600"/><path d="M1090.500 662.500v5.500h2" fill="none" stroke="#e8ecf2" stroke-width="1"/></g>
<!-- speaker -->
<g><path d="M1109.500 660.500h2.500l4-3.500v11.500l-4-3.500h-2.500z" fill="#f2f4f8" stroke="#7a8698" stroke-width="0.500"/><path d="M1117.800 659.500c1.300 1.800 1.300 4.700 0 6.500M1119.800 657.800c2.200 2.800 2.200 7 0 9.800" fill="none" stroke="#eef2f6" stroke-width="1.100" stroke-linecap="round"/></g>
<!-- show desktop -->
<rect x="1197.500" y="645.500" width="12.500" height="34.500" fill="url(#sd)" stroke="#c4d0e0" stroke-width="0.800"/>
<rect x="1196.500" y="645" width="1" height="35" fill="#5d6f88"/>
</svg>
<span class="t" style="left:1149.500px;top:648px;color:#f4f7fb;font-size:11.200px;letter-spacing:0.050px">14:20</span>
<span class="t" style="left:1137.500px;top:664px;color:#f4f7fb;font-size:11.200px;letter-spacing:0.100px">2015/8/18</span>
<!--TASK-END-->
</body>
</html>
